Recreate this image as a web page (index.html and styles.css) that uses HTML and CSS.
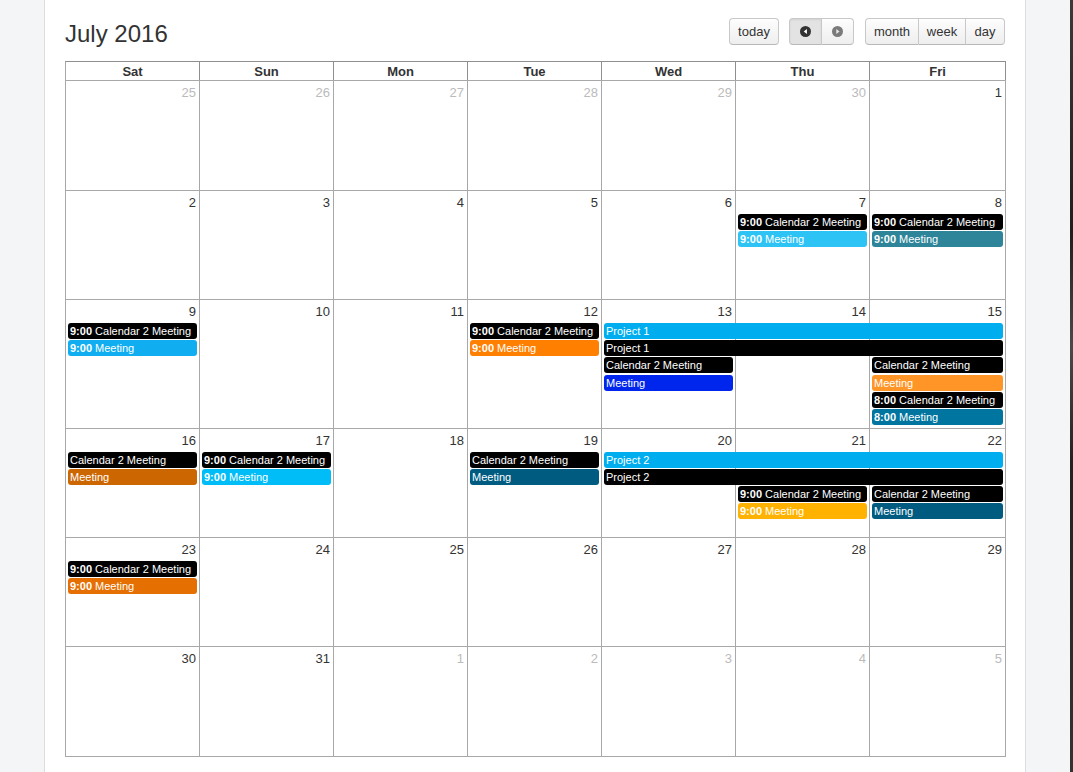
FILE: index.html
```html
<!DOCTYPE html>
<html>
<head>
<meta charset="utf-8">
<link rel="stylesheet" href="styles.css">
</head>
<body>
<div class="page">
  <div class="gutter"></div>
  <div class="panel">
    <div class="toolbar">
      <h2 class="title">July 2016</h2>
      <div class="tools">
        <button class="btn b-today">today</button>
        <div class="group">
          <button class="btn b-prev active"><svg width="11" height="11" viewBox="0 0 10 10"><circle cx="5" cy="5" r="5" fill="#333"/><path d="M6.3 2.8 L3.4 5 L6.3 7.2 Z" fill="#fff"/></svg></button>
          <button class="btn b-next"><svg width="11" height="11" viewBox="0 0 10 10"><circle cx="5" cy="5" r="5" fill="#7a7a7a"/><path d="M3.9 2.8 L6.8 5 L3.9 7.2 Z" fill="#e8e8e8"/></svg></button>
        </div>
        <div class="group">
          <button class="btn b-month">month</button>
          <button class="btn b-week">week</button>
          <button class="btn b-day">day</button>
        </div>
      </div>
    </div>

    <div class="cal">
      <div class="dow">
        <div>Sat</div><div>Sun</div><div>Mon</div><div>Tue</div><div>Wed</div><div>Thu</div><div>Fri</div>
      </div>

      <div class="week w-first">
        <div class="day c1 other">25</div><div class="day c2 other">26</div><div class="day c3 other">27</div><div class="day c4 other">28</div><div class="day c5 other">29</div><div class="day c6 other">30</div><div class="day c7">1</div>
        <div class="filler"></div>
      </div>

      <div class="week">
        <div class="day c1">2</div><div class="day c2">3</div><div class="day c3">4</div><div class="day c4">5</div><div class="day c5">6</div><div class="day c6">7</div><div class="day c7">8</div>
        <div class="ev c6 r1 black"><b>9:00</b> Calendar 2 Meeting</div>
        <div class="ev c6 r2 sky"><b>9:00</b> Meeting</div>
        <div class="ev c7 r1 black"><b>9:00</b> Calendar 2 Meeting</div>
        <div class="ev c7 r2 teal"><b>9:00</b> Meeting</div>
        <div class="filler"></div>
      </div>

      <div class="week">
        <div class="day c1">9</div><div class="day c2">10</div><div class="day c3">11</div><div class="day c4">12</div><div class="day c5">13</div><div class="day c6">14</div><div class="day c7">15</div>
        <div class="ev c1 r1 black"><b>9:00</b> Calendar 2 Meeting</div>
        <div class="ev c1 r2 blue1"><b>9:00</b> Meeting</div>
        <div class="ev c4 r1 black"><b>9:00</b> Calendar 2 Meeting</div>
        <div class="ev c4 r2 orange1"><b>9:00</b> Meeting</div>
        <div class="ev c5 span3 r1 project">Project 1</div>
        <div class="ev c5 span3 r2 black">Project 1</div>
        <div class="ev c5 r3 black">Calendar 2 Meeting</div>
        <div class="ev c5 r4 royal">Meeting</div>
        <div class="ev c7 r3 black">Calendar 2 Meeting</div>
        <div class="ev c7 r4 orange2">Meeting</div>
        <div class="ev c7 r5 black"><b>8:00</b> Calendar 2 Meeting</div>
        <div class="ev c7 r6 ocean"><b>8:00</b> Meeting</div>
        <div class="filler"></div>
      </div>

      <div class="week">
        <div class="day c1">16</div><div class="day c2">17</div><div class="day c3">18</div><div class="day c4">19</div><div class="day c5">20</div><div class="day c6">21</div><div class="day c7">22</div>
        <div class="ev c1 r1 black">Calendar 2 Meeting</div>
        <div class="ev c1 r2 rust">Meeting</div>
        <div class="ev c2 r1 black"><b>9:00</b> Calendar 2 Meeting</div>
        <div class="ev c2 r2 sky2"><b>9:00</b> Meeting</div>
        <div class="ev c4 r1 black">Calendar 2 Meeting</div>
        <div class="ev c4 r2 navy">Meeting</div>
        <div class="ev c5 span3 r1 project">Project 2</div>
        <div class="ev c5 span3 r2 black">Project 2</div>
        <div class="ev c6 r3 black"><b>9:00</b> Calendar 2 Meeting</div>
        <div class="ev c6 r4 amber"><b>9:00</b> Meeting</div>
        <div class="ev c7 r3 black">Calendar 2 Meeting</div>
        <div class="ev c7 r4 navy">Meeting</div>
        <div class="filler"></div>
      </div>

      <div class="week">
        <div class="day c1">23</div><div class="day c2">24</div><div class="day c3">25</div><div class="day c4">26</div><div class="day c5">27</div><div class="day c6">28</div><div class="day c7">29</div>
        <div class="ev c1 r1 black"><b>9:00</b> Calendar 2 Meeting</div>
        <div class="ev c1 r2 pumpkin"><b>9:00</b> Meeting</div>
        <div class="filler"></div>
      </div>

      <div class="week w-last">
        <div class="day c1">30</div><div class="day c2">31</div><div class="day c3 other">1</div><div class="day c4 other">2</div><div class="day c5 other">3</div><div class="day c6 other">4</div><div class="day c7 other">5</div>
        <div class="filler"></div>
      </div>
    </div>
  </div>
  <div class="gutter-right"></div>
  <div class="edge"></div>
</div>
</body>
</html>
```

FILE: styles.css
```css
html, body {
  margin: 0;
  padding: 0;
  height: 100%;
  overflow: hidden;
}
body {
  font-family: "Liberation Sans", Arial, Helvetica, sans-serif;
  color: #333;
  background: #f4f5f7;
}
.page {
  display: flex;
  height: 772px;
}
.gutter {
  width: 44px;
  flex: none;
  background: #f4f5f7;
}
.panel {
  width: 960px;
  flex: none;
  background: #fff;
  border-left: 1px solid #dcdde0;
  border-right: 1px solid #dcdde0;
  padding: 18px 0 0 20px;
  box-sizing: content-box;
  height: 754px;
}
.gutter-right {
  flex: 1;
  background: #f4f5f7;
}
.edge {
  width: 3px;
  flex: none;
  background: linear-gradient(180deg, #3a3a3a, #1f1f1f 30%, #4a4a4a 45%, #222 60%, #333);
}

.toolbar {
  width: 940px;
  display: flex;
  justify-content: space-between;
  align-items: flex-start;
  height: 43px;
}
.title {
  margin: 4px 0 0 0;
  font-size: 24px;
  line-height: 24px;
  font-weight: normal;
  color: #333;
}
.tools {
  display: flex;
  gap: 10px;
}
.tools .group + .group {
  margin-left: 1px;
}
.group {
  display: flex;
}
.btn {
  height: 27px;
  margin: 0;
  padding: 0;
  font-family: "Liberation Sans", Arial, Helvetica, sans-serif;
  font-size: 13px;
  color: #333;
  background: linear-gradient(180deg, #fdfdfd 0%, #eeeeee 100%);
  border: 1px solid #c8c8c8;
  border-bottom-color: #b8b8b8;
  border-radius: 4px;
  box-shadow: inset 0 1px 0 rgba(255,255,255,0.6);
  display: flex;
  align-items: center;
  justify-content: center;
}
.group .btn {
  border-radius: 0;
}
.group .btn + .btn {
  border-left: none;
}
.group .btn:first-child {
  border-radius: 4px 0 0 4px;
}
.group .btn:last-child {
  border-radius: 0 4px 4px 0;
}
.btn.active {
  background: #e3e3e3;
  box-shadow: inset 0 1px 2px rgba(0,0,0,0.08);
}
.b-today { width: 50px; }
.b-prev { width: 33px; }
.b-next { width: 32px; }
.b-month { width: 54px; }
.b-week { width: 47px; }
.b-day { width: 39px; }

.cal {
  width: 941px;
  border-left: 1px solid #a8a8a8;
  border-top: 1px solid #8f8f8f;
  box-sizing: border-box;
}
.dow {
  display: grid;
  grid-template-columns: repeat(6, 134px) 1fr;
  border-bottom: 1px solid #a8a8a8;
}
.dow div {
  border-right: 1px solid #8f8f8f;
  text-align: center;
  font-weight: bold;
  font-size: 13px;
  line-height: 17px;
  padding-top: 1px;
  color: #333;
}
.week {
  display: grid;
  grid-template-columns: repeat(6, 134px) 1fr;
  grid-template-rows: 21.8px repeat(6, auto) minmax(3px, 1fr);
  min-height: 109px;
  border-bottom: 1px solid #a8a8a8;
  box-sizing: border-box;
}
.week.w-first,
.week.w-last {
  min-height: 110px;
}
.day {
  grid-row: 1 / -1;
  border-right: 1px solid #a8a8a8;
  text-align: right;
  padding: 4px 3px 0 0;
  font-size: 13px;
  line-height: 16px;
  color: #333;
}
.day.other {
  color: #bbb;
}
.filler {
  grid-row: 8;
  grid-column: 1;
}
.c1 { grid-column: 1; }
.c2 { grid-column: 2; }
.c3 { grid-column: 3; }
.c4 { grid-column: 4; }
.c5 { grid-column: 5; }
.c6 { grid-column: 6; }
.c7 { grid-column: 7; }
.c5.span3 { grid-column: 5 / span 3; }
.r1 { grid-row: 2; }
.r2 { grid-row: 3; }
.r3 { grid-row: 4; }
.r4 { grid-row: 5; }
.r5 { grid-row: 6; }
.r6 { grid-row: 7; }

.ev {
  margin: 1.2px 3px 0 2px;
  height: 16px;
  line-height: 16px;
  padding-left: 2px;
  font-size: 11px;
  color: #fff;
  border-radius: 3px;
  white-space: nowrap;
  overflow: hidden;
}
.ev b { font-weight: bold; }

.black { background: #000; }
.sky { background: #2ec3f5; }
.teal { background: #2e8599; }
.blue1 { background: #10aef0; }
.orange1 { background: #ff8000; }
.project { background: #00aeef; }
.royal { background: #0026ee; }
.orange2 { background: #ff9526; }
.ocean { background: #00759f; }
.rust { background: #cc6600; }
.sky2 { background: #00bcf7; }
.navy { background: #005b80; }
.amber { background: #ffb300; }
.pumpkin { background: #e56f00; }
```
